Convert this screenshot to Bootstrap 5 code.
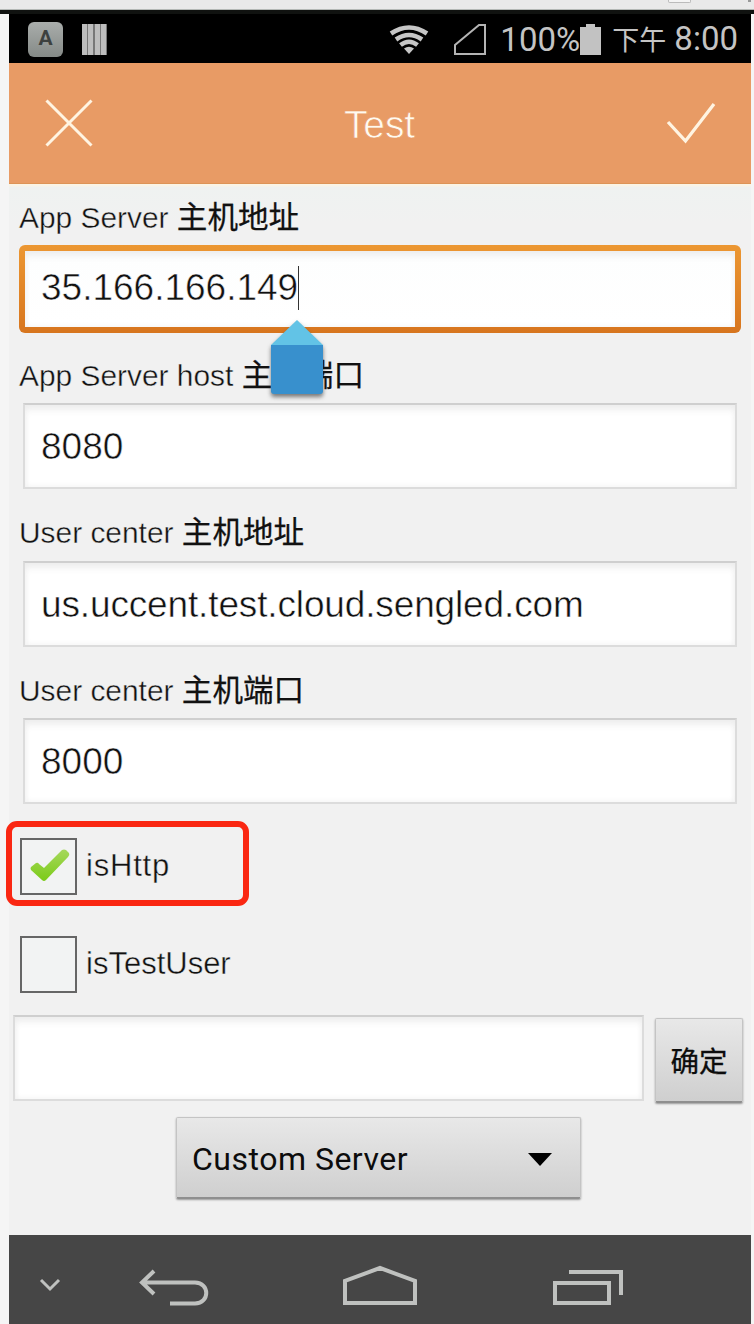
<!DOCTYPE html>
<html lang="zh-CN">
<head>
<meta charset="utf-8">
<meta name="viewport" content="width=device-width, initial-scale=1">
<title>Test</title>
<link href="https://cdn.jsdelivr.net/npm/bootstrap@5.3.0/dist/css/bootstrap.min.css" rel="stylesheet">
<style>
  body { background: #f5f5f5; font-family: "Liberation Sans", "Noto Sans CJK SC", sans-serif; color: #111; height: 1324px; overflow: hidden; }
  svg { display: block; flex: none; }
  .window-edge { height: 14px; background: linear-gradient(#e9e9e9 0 8.5px, #b4b8b5 9px 10px, #101210 10px); }
  .window-edge i { position: absolute; top: 0; right: 63px; width: 23px; height: 3px; background: #f4f4f4; border: 1px solid #bbb; border-top: 0; border-radius: 0 0 2px 2px; }
  .window-edge b { position: absolute; top: 0; right: 3px; width: 3px; height: 2px; background: #999; }
  .phone { width: 742px; height: 1310px; margin-left: 9px; background: #f1f1f1; }
  .status { height: 49px; background: #000; color: #c4c4c4; font: 400 33px/49px Roboto, "Noto Sans CJK SC", sans-serif; padding: 2px 13px 0 19px; }
  .app-key { width: 35px; height: 35px; border-radius: 6px; background: linear-gradient(#a9adab, #858a87); color: #3d413f; font: 700 21px/32px Roboto, sans-serif; }
  .stripes { width: 25px; height: 31px; margin: 0 0 0 19px; background: repeating-linear-gradient(90deg, #bdbdbd 0 5px, #777 5px 6.4px); }
  .topbar { height: 121px; background: #e89b65; border-bottom: 1px solid #dd9457; color: #fffaf0; }
  .topbar h1 { font-size: 39px; font-weight: 400; line-height: 1; letter-spacing: -.1px; margin: 3px 0 0 0; -webkit-text-stroke: .7px #e89b65; }
  .fields { padding: 4px 14px 0 14px; background: linear-gradient(#faf4e6 0 2px, #eff2f1 3px, #f1f1f1 40px); height: 635px; }
  .fld { height: 157.67px; }
  .fld label { height: 57.5px; line-height: 54px; font-size: 29.9px; margin-left: -4px; white-space: nowrap; -webkit-text-stroke: .4px #f1f1f1; }
  .cjk { font-family: "Noto Sans CJK SC", sans-serif; font-weight: 400; font-size: 30.6px; -webkit-text-stroke: .25px #111; }
  .box { height: 86px; border: 2px solid #dcdcdc; border-top-color: #cfcfcf; border-radius: 0; background: #fff; box-shadow: inset 0 7px 9px -3px #ececec, inset 0 0 6px #f0f0f0; padding: 1px 0 0 16px; font-size: 37px; display: flex; align-items: center; white-space: nowrap; -webkit-text-stroke: .5px #fff; }
  .box.active { height: 88px; margin: -1px -4px -1px -4px; border: 6px solid transparent; border-radius: 6px; background: linear-gradient(#fdfefe, #fff) padding-box, linear-gradient(#ec9732, #d7751e) border-box; padding: 0 0 1px 16px; }
  .caret { width: 1px; height: 44px; background: #333; }
  .handle { position: absolute; left: 246px; top: 69px; z-index: 2; filter: drop-shadow(0 3px 2px rgba(40,40,40,.6)); }
  .chk { height: 57px; margin-left: 11px; font-size: 31px; -webkit-text-stroke: .4px #f1f1f1; }
  .tick { width: 57px; height: 57px; border: 2.5px solid #666; background: #f2f3f3; margin-right: 9px; }
  .marked { position: absolute; left: -14px; top: -17px; width: 243px; height: 85px; border: 6px solid #fa2712; border-radius: 11px; }
  .key { background: linear-gradient(#e8e8e8, #cfcfcf); border: 1px solid #c4c4c4; border-bottom: 2px solid #8f8f8f; border-radius: 2px; box-shadow: 0 1px 2px #999; color: #0c0c0c; padding: 0; }
  .ok { width: 88px; height: 85px; font: 400 28.5px/1 "Noto Sans CJK SC", sans-serif; margin-top: 3px; -webkit-text-stroke: .3px #0c0c0c; }
  .server { width: 405px; height: 82px; margin: 14px 0 0 167px; font: 400 32px/1 Roboto, sans-serif; padding: 3px 28px 0 15px; letter-spacing: .5px; }
  .navkeys { height: 89px; background: #464646; margin-top: auto; }
</style>
</head>
<body>
<div class="window-edge position-relative"><i></i><b></b></div>
<main class="phone d-flex flex-column">
  <div class="status d-flex align-items-center">
    <span class="app-key text-center">A</span>
    <span class="stripes"></span>
    <svg class="ms-auto" width="40" height="30" viewBox="0 0 40 30" fill="none" stroke="#c6c6c6" stroke-width="4.600"><path d="M2 8.500Q20-3.500 38 8.500M7 14.500Q20 5.500 33 14.500M11.500 20Q20 13.500 28.500 20"/><path d="M20 29l-5-5.500q5-3.500 10 0z" fill="#c6c6c6" stroke="none"/></svg>
    <svg style="margin-left:25px" width="32" height="32" viewBox="0 0 32 32" fill="none" stroke="#b4b4b4" stroke-width="2"><path d="M1 30V21L25 1h6v29z"/></svg>
    <span style="margin-left:14px">100%</span>
    <svg width="21" height="31" viewBox="0 0 21 31" fill="#c2c2c2"><path d="M0 3h6V0h9v3h6v28H0z"/></svg>
    <span style="margin-left:11px"><span style="font-size:27px">下午</span> 8:00</span>
  </div>
  <header class="topbar d-flex align-items-center justify-content-between">
    <svg style="margin-left:36px" width="48" height="48" viewBox="0 0 48 48" stroke="#fff4e2" stroke-width="3"><path d="M1.500 1.500l45 45M46.500 1.500l-45 45"/></svg>
    <h1>Test</h1>
    <svg style="margin-right:35px" width="50" height="42" viewBox="0 0 50 42" fill="none" stroke="#fff4e2" stroke-width="3.300"><path d="M2 20l17.500 19L48 2"/></svg>
  </header>

  <form class="fields">
    <div class="fld">
      <label class="d-block">App Server <span class="cjk">主机地址</span></label>
      <div class="box active position-relative"><span>35.166.166.149</span><span class="caret"></span>
        <svg class="handle" width="52" height="75" viewBox="0 0 52 75"><path d="M26 0L52 25H0z" fill="#62c3e6"/><path d="M0 25h52v46q0 3-3 3H3q-3 0-3-3z" fill="#3890cd"/></svg>
      </div>
    </div>
    <div class="fld">
      <label class="d-block">App Server host <span class="cjk">主机端口</span></label>
      <div class="box"><span>8080</span></div>
    </div>
    <div class="fld">
      <label class="d-block">User center <span class="cjk">主机地址</span></label>
      <div class="box"><span style="letter-spacing:-.14px">us.uccent.test.cloud.sengled.com</span></div>
    </div>
    <div class="fld">
      <label class="d-block">User center <span class="cjk">主机端口</span></label>
      <div class="box"><span>8000</span></div>
    </div>
  </form>

  <div class="chk d-flex align-items-center position-relative" style="margin-top:19px">
    <span class="tick"><svg width="52" height="52" viewBox="0 0 52 52"><defs><linearGradient id="g" x2="0" y2="1"><stop stop-color="#a6d85c"/><stop offset="1" stop-color="#7bcb18"/></linearGradient></defs><path d="M9 27l5-4q2-1 3 1l5 4L40 10q2-1 4 0l3 3q1 2-1 4L24 40q-2 2-4 0L9 30q-1-2 0-3z" fill="url(#g)"/></svg></span>
    <span style="letter-spacing:.8px">isHttp</span>
    <span class="marked"></span>
  </div>
  <div class="chk d-flex align-items-center" style="margin-top:41px">
    <span class="tick"></span><span>isTestUser</span>
  </div>

  <div class="d-flex" style="margin:22px 0 0 4px;gap:11px">
    <div class="box" style="width:631px"></div>
    <button class="btn key ok" type="button">确定</button>
  </div>
  <button class="btn key server d-flex align-items-center justify-content-between" type="button">Custom Server
    <svg width="24" height="13" viewBox="0 0 24 13"><path d="M0 0h24L12 13z"/></svg>
  </button>

  <nav class="navkeys">
    <svg width="742" height="89" viewBox="9 1235 742 89" fill="none" stroke="#bfc1bf" stroke-width="4">
      <path d="M41 1280l9 9 9-9" stroke-width="3"/>
      <path d="M154 1271l-12 11.500 12 11.500M142 1282.500h53c15 0 15 21 0 21h-25"/>
      <path d="M345 1303V1281l35-13 35 13v22z"/>
      <path d="M555 1283h54v20h-54zM569 1272h52v23"/>
    </svg>
  </nav>
</main>
<script src="https://cdn.jsdelivr.net/npm/bootstrap@5.3.0/dist/js/bootstrap.bundle.min.js"></script>
</body>
</html>
